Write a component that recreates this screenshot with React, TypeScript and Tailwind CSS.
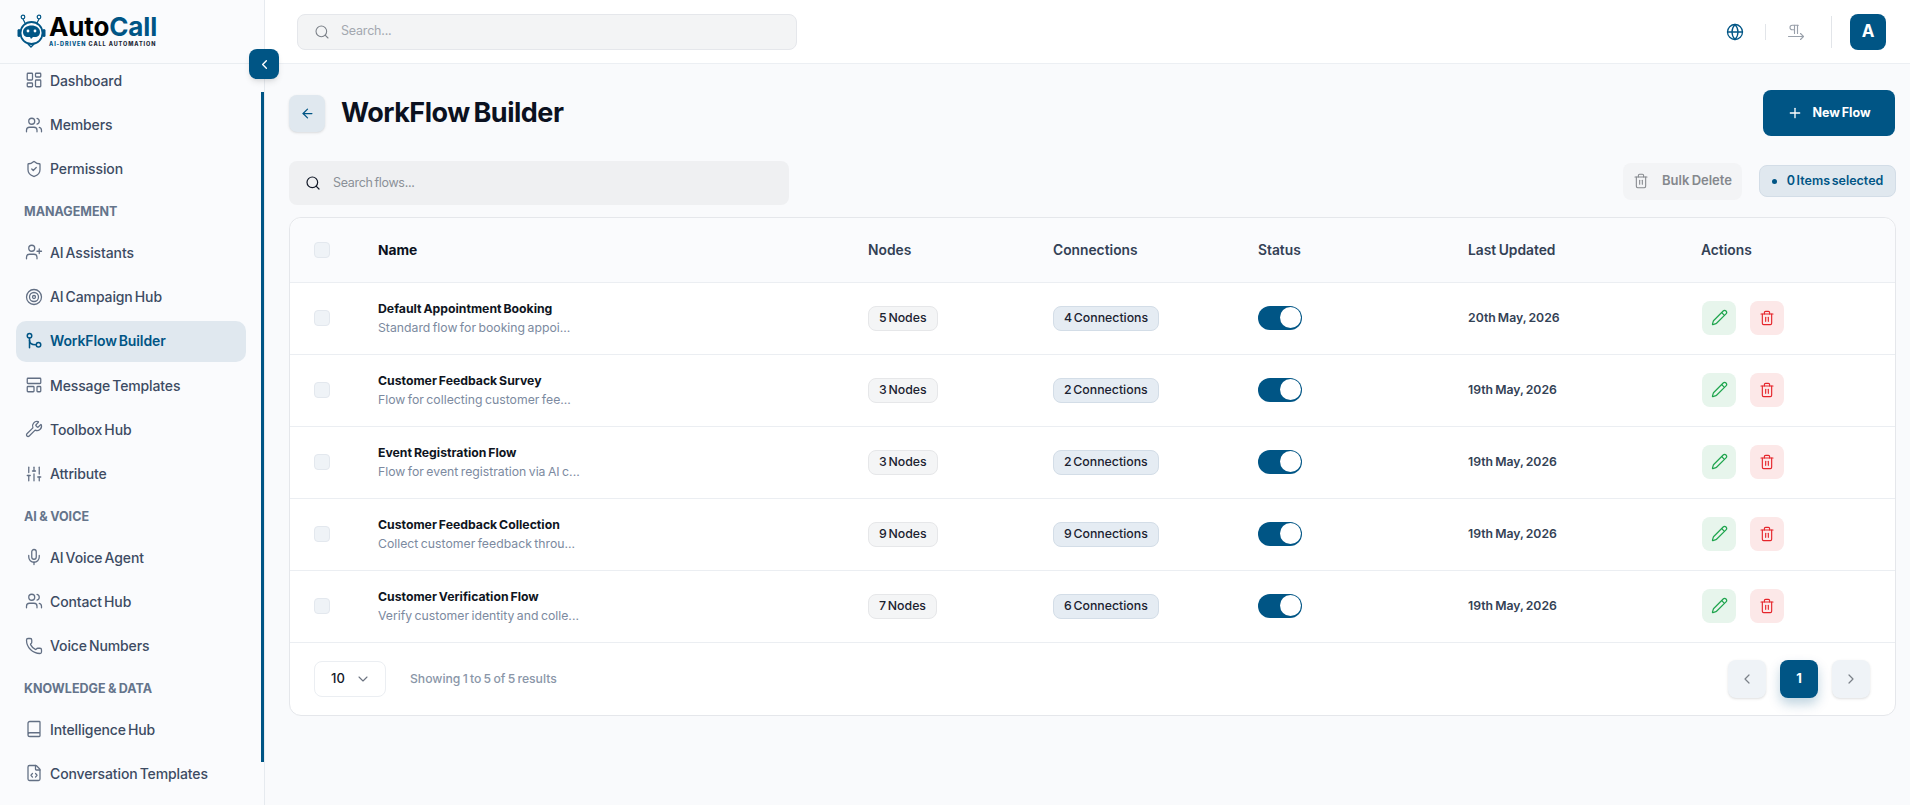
import { ReactNode } from "react";
import {
  ArrowLeft,
  Book,
  ChevronDown,
  ChevronLeft,
  ChevronRight,
  FileCode,
  Globe,
  LayoutDashboard,
  LayoutTemplate,
  Mic,
  Pencil,
  Phone,
  PilcrowRight,
  Plus,
  Search,
  ShieldCheck,
  SlidersVertical,
  Target,
  Trash2,
  UserPlus,
  Users,
  Wrench,
} from "lucide-react";

const FlowIcon = ({ size = 18, className = "" }: { size?: number; className?: string }) => (
  <svg width={size} height={size} viewBox="0 0 24 24" fill="none" stroke="currentColor" strokeWidth="2" strokeLinecap="round" strokeLinejoin="round" className={className}>
    <circle cx="6" cy="5" r="3" />
    <path d="M6 8v13" />
    <path d="M6 11c0 3.500 3 6 8 6" />
    <circle cx="18" cy="17" r="3" />
  </svg>
);

const Logo = () => (
  <div className="flex items-center gap-[1px]">
    <svg width="32" height="34" viewBox="0 0 32 34" fill="none">
      <circle cx="7" cy="3" r="1.800" stroke="#005585" strokeWidth="1.200" />
      <circle cx="23" cy="3" r="1.800" stroke="#005585" strokeWidth="1.200" />
      <path d="M7 5l2.500 5M23 5l-2.500 5" stroke="#005585" strokeWidth="1.200" />
      <circle cx="15.500" cy="19" r="11" stroke="#005585" strokeWidth="1.800" />
      <path d="M7 18c0-4 4-6.500 8.500-6.500S24 14 24 18c0 3-2 5-5 5h-2l-2 2-1-2h-2c-3 0-5-2-5-5z" fill="#005585" />
      <circle cx="12" cy="17" r="1.400" fill="#fafbfd" />
      <circle cx="19" cy="17" r="1.400" fill="#fafbfd" />
      <rect x="1.500" y="15" width="3" height="8" rx="1.500" fill="#005585" />
      <rect x="26.500" y="15" width="3" height="8" rx="1.500" fill="#005585" />
      <path d="M12 30l3 3 3-3" stroke="#005585" strokeWidth="1.400" />
    </svg>
    <div className="flex flex-col">
      <div className="text-[26px] leading-[25px] font-bold tracking-[-0.15px]">
        <span className="text-black">Auto</span>
        <span className="text-[#005585]">Call</span>
      </div>
      <div className="mt-[2px] text-[5.5px] leading-[7px] font-extrabold tracking-[0.9px] whitespace-nowrap">
        <span className="text-[#005585]">AI-DRIVEN</span>
        <span className="text-[#1f2937]"> CALL AUTOMATION</span>
      </div>
    </div>
  </div>
);

type NavEntry = { label: string; icon?: ReactNode; active?: boolean };

const navItems: NavEntry[] = [
  { label: "Dashboard", icon: <LayoutDashboard size={18} strokeWidth={1.7} /> },
  { label: "Members", icon: <Users size={18} strokeWidth={1.7} /> },
  { label: "Permission", icon: <ShieldCheck size={18} strokeWidth={1.7} /> },
  { label: "MANAGEMENT" },
  { label: "AI Assistants", icon: <UserPlus size={18} strokeWidth={1.7} /> },
  { label: "AI Campaign Hub", icon: <Target size={18} strokeWidth={1.7} /> },
  { label: "WorkFlow Builder", icon: <FlowIcon size={18} />, active: true },
  { label: "Message Templates", icon: <LayoutTemplate size={18} strokeWidth={1.7} /> },
  { label: "Toolbox Hub", icon: <Wrench size={18} strokeWidth={1.7} /> },
  { label: "Attribute", icon: <SlidersVertical size={18} strokeWidth={1.7} /> },
  { label: "AI & VOICE" },
  { label: "AI Voice Agent", icon: <Mic size={18} strokeWidth={1.7} /> },
  { label: "Contact Hub", icon: <Users size={18} strokeWidth={1.7} /> },
  { label: "Voice Numbers", icon: <Phone size={18} strokeWidth={1.7} /> },
  { label: "KNOWLEDGE & DATA" },
  { label: "Intelligence Hub", icon: <Book size={18} strokeWidth={1.7} /> },
  { label: "Conversation Templates", icon: <FileCode size={18} strokeWidth={1.7} /> },
];

const flows = [
  { name: "Default Appointment Booking", desc: "Standard flow for booking appoi...", nodes: "5 Nodes", conns: "4 Connections", date: "20th May, 2026" },
  { name: "Customer Feedback Survey", desc: "Flow for collecting customer fee...", nodes: "3 Nodes", conns: "2 Connections", date: "19th May, 2026" },
  { name: "Event Registration Flow", desc: "Flow for event registration via AI c...", nodes: "3 Nodes", conns: "2 Connections", date: "19th May, 2026" },
  { name: "Customer Feedback Collection", desc: "Collect customer feedback throu...", nodes: "9 Nodes", conns: "9 Connections", date: "19th May, 2026" },
  { name: "Customer Verification Flow", desc: "Verify customer identity and colle...", nodes: "7 Nodes", conns: "6 Connections", date: "19th May, 2026" },
];

const gridCols = "grid grid-cols-[88px_490px_185px_205px_210px_233px_1fr] items-center";

function Sidebar() {
  return (
    <aside className="relative flex h-full w-[265px] shrink-0 flex-col border-r border-[#e6eaef] bg-[#fafbfd]">
      <div className="flex h-[64px] shrink-0 items-center border-b border-[#e9edf1] pb-[2px] pl-4">
        <Logo />
      </div>
      <nav className="flex-1 overflow-hidden">
        <div className="-mt-[4px] flex flex-col gap-[3px] pr-[18px] pl-4">
          {navItems.map((item) =>
            item.icon ? (
              <div
                key={item.label}
                className={
                  "flex h-[41.25px] shrink-0 items-center gap-[7px] rounded-[10px] pb-[0.5px] pl-[9px] text-[14px] tracking-[-0.12px] whitespace-nowrap [word-spacing:-1.5px] " +
                  (item.active ? "bg-[#e0e8ef] font-semibold text-[#005585]" : "font-medium text-[#3d4b63]")
                }
              >
                <span className={item.active ? "text-[#005585]" : "text-[#626f84]"}>{item.icon}</span>
                {item.label}
              </div>
            ) : (
              <div key={item.label} className="flex h-[36.25px] shrink-0 items-center pt-[3px] pl-2 text-[12.5px] font-bold text-[#64748b] [word-spacing:-0.5px]">
                {item.label}
              </div>
            ),
          )}
        </div>
      </nav>
      {/* scroll thumb that sits on the sidebar edge */}
      <div className="absolute top-[92px] right-0 h-[670px] w-[3px] bg-[#005585]" />
      <button className="absolute top-[49px] left-[249px] z-10 flex h-[30px] w-[30px] items-center justify-center rounded-lg bg-[#005585] text-white shadow-md">
        <ChevronLeft size={15} strokeWidth={2.2} />
      </button>
    </aside>
  );
}

function Topbar() {
  return (
    <header className="flex h-[64px] shrink-0 items-center justify-between border-b border-[#eceff3] bg-white pr-6 pl-8">
      <div className="flex h-9 w-[500px] items-center gap-[11px] rounded-lg border border-[#e5e7eb] bg-[#f3f4f5] pl-[16px] text-[12.5px] tracking-[-0.2px] text-[#a3a8b0]">
        <Search size={16} strokeWidth={1.6} className="text-[#7b8088]" />
        Search...
      </div>
      <div className="flex items-center">
        <Globe size={18} strokeWidth={1.7} className="text-[#005585]" />
        <span className="mx-[21px] h-4 w-px bg-[#e2e5e9]" />
        <PilcrowRight size={18} strokeWidth={1.5} className="text-[#9aa1ab]" />
        <span className="mr-[18px] ml-[26px] h-8 w-px bg-[#e2e5e9]" />
        <div className="flex h-9 w-9 items-center justify-center rounded-lg bg-[#005585] text-[17px] font-bold text-white">A</div>
      </div>
    </header>
  );
}

function Checkbox() {
  return <span className="block h-4 w-4 rounded-[4px] border border-[#e3e8ee] bg-[#eff3f7]" />;
}

function FlowRow({ flow }: { flow: (typeof flows)[number] }) {
  return (
    <div className={gridCols + " h-[72px] border-b border-[#ebeef2] pb-[2px]"}>
      <div className="pl-6">
        <Checkbox />
      </div>
      <div className="flex flex-col pt-px">
        <span className="text-[12.25px] leading-[18px] font-bold text-[#0f1522] [word-spacing:-1px]">{flow.name}</span>
        <span className="text-[12.25px] leading-[19px] font-normal text-[#7c8aa0] [word-spacing:-1px]">{flow.desc}</span>
      </div>
      <div>
        <span className="inline-flex h-[25px] items-center rounded-lg border border-[#e6e7e9] bg-[#f4f5f6] px-[10px] text-[12.3px] font-medium text-[#1b2230] [word-spacing:-1.5px]">
          {flow.nodes}
        </span>
      </div>
      <div>
        <span className="inline-flex h-[25px] items-center rounded-lg border border-[#d3dde7] bg-[#e5ecf3] px-[10px] text-[12.3px] font-medium text-[#1b2230] [word-spacing:-1.5px]">
          {flow.conns}
        </span>
      </div>
      <div>
        <span className="flex h-6 w-11 items-center justify-end rounded-full bg-[#005585] pr-[1px]">
          <span className="h-[21px] w-[21px] rounded-full bg-white" />
        </span>
      </div>
      <div className="pt-px text-[12.25px] font-semibold text-[#334155] [word-spacing:-1px]">{flow.date}</div>
      <div className="flex gap-[14px] pl-px">
        <button className="flex h-[34px] w-[34px] items-center justify-center rounded-lg bg-[#e7f5ec] text-[#1fa54e]">
          <Pencil size={17} strokeWidth={1.7} />
        </button>
        <button className="flex h-[34px] w-[34px] items-center justify-center rounded-lg bg-[#fce8e8] text-[#e5242a]">
          <Trash2 size={16} strokeWidth={1.7} />
        </button>
      </div>
    </div>
  );
}

export default function App() {
  return (
    <div className="flex h-screen w-full overflow-hidden bg-[#f9fafc] font-['Inter',sans-serif]">
      <Sidebar />
      <div className="flex min-w-0 flex-1 flex-col">
        <Topbar />
        <main className="flex flex-col pt-[26px] pr-[14px] pl-6">
          <div className="flex h-[46px] items-center justify-between">
            <div className="flex items-center gap-4">
              <button className="flex h-[37px] w-9 items-center justify-center rounded-lg bg-[#e0e8ef] text-[#005585] shadow-sm">
                <ArrowLeft size={15} strokeWidth={2} />
              </button>
              <h1 className="pt-px text-[27px] font-bold tracking-[-0.5px] text-[#0b1120] [word-spacing:-2px]">WorkFlow Builder</h1>
            </div>
            <button className="mr-px flex h-[46px] w-[132px] items-center justify-center gap-[9px] rounded-lg bg-[#005585] text-[12.5px] font-bold text-white [word-spacing:-1px]">
              <Plus size={16} strokeWidth={2} />
              New Flow
            </button>
          </div>

          <div className="mt-[25px] flex items-center justify-between">
            <div className="flex h-[44px] w-[500px] items-center gap-[12px] rounded-lg bg-[#eff0f2] pl-[16px] text-[12.5px] tracking-[-0.3px] text-[#8b9098] [word-spacing:-1.5px]">
              <Search size={16} strokeWidth={1.8} className="text-[#111827]" />
              Search flows...
            </div>
            <div className="mb-1 flex items-center gap-[17px]">
              <button className="flex h-[37px] w-[119px] items-center justify-center gap-[13px] rounded-lg bg-[#f3f4f6] text-[13px] font-semibold text-[#85888d] [word-spacing:-1px]">
                <Trash2 size={16} strokeWidth={1.6} />
                Bulk Delete
              </button>
              <div className="flex h-8 w-[137px] items-center justify-center gap-[10px] rounded-lg border border-[#d3dde7] bg-[#e0e8ef] text-[12.5px] font-semibold text-[#005585] [word-spacing:-1.5px]">
                <span className="h-[5px] w-[5px] rounded-full bg-[#005585]" />
                0 Items selected
              </div>
            </div>
          </div>

          <section className="mt-3 h-[499px] rounded-xl border border-[#e5e7eb] bg-white">
            <div className={gridCols + " h-[65px] rounded-t-xl border-b border-[#ebeef2] bg-[#fafbfd] text-[13.8px] font-semibold text-[#334155]"}>
              <div className="pl-6">
                <Checkbox />
              </div>
              <span className="font-bold text-[#0b1120]">Name</span>
              <span>Nodes</span>
              <span>Connections</span>
              <span>Status</span>
              <span className="[word-spacing:-1px]">Last Updated</span>
              <span>Actions</span>
            </div>
            {flows.map((flow) => (
              <FlowRow key={flow.name} flow={flow} />
            ))}
            <div className="flex h-[72px] items-center justify-between pr-[25px] pl-6">
              <div className="flex items-center gap-6">
                <div className="flex h-9 w-[72px] items-center justify-between rounded-lg border border-[#ebeef2] pr-[14px] pl-4 text-[13px] font-medium text-[#111827]">
                  10
                  <ChevronDown size={16} strokeWidth={1.6} className="text-[#6b7280]" />
                </div>
                <span className="text-[12.2px] font-medium text-[#8a96a8] [word-spacing:-1px]">Showing 1 to 5 of 5 results</span>
              </div>
              <div className="flex items-center gap-[14px]">
                <button className="flex h-[38px] w-[38px] items-center justify-center rounded-lg bg-[#eff3f7] text-[#7b8088] shadow-sm">
                  <ChevronLeft size={16} strokeWidth={1.8} />
                </button>
                <button className="flex h-[38px] w-[38px] items-center justify-center rounded-lg bg-[#005585] text-[13px] font-bold text-white shadow-[0_6px_12px_rgba(0,85,133,0.25)]">
                  1
                </button>
                <button className="flex h-[38px] w-[38px] items-center justify-center rounded-lg bg-[#eff3f7] text-[#7b8088] shadow-sm">
                  <ChevronRight size={16} strokeWidth={1.8} />
                </button>
              </div>
            </div>
          </section>
        </main>
      </div>
    </div>
  );
}
